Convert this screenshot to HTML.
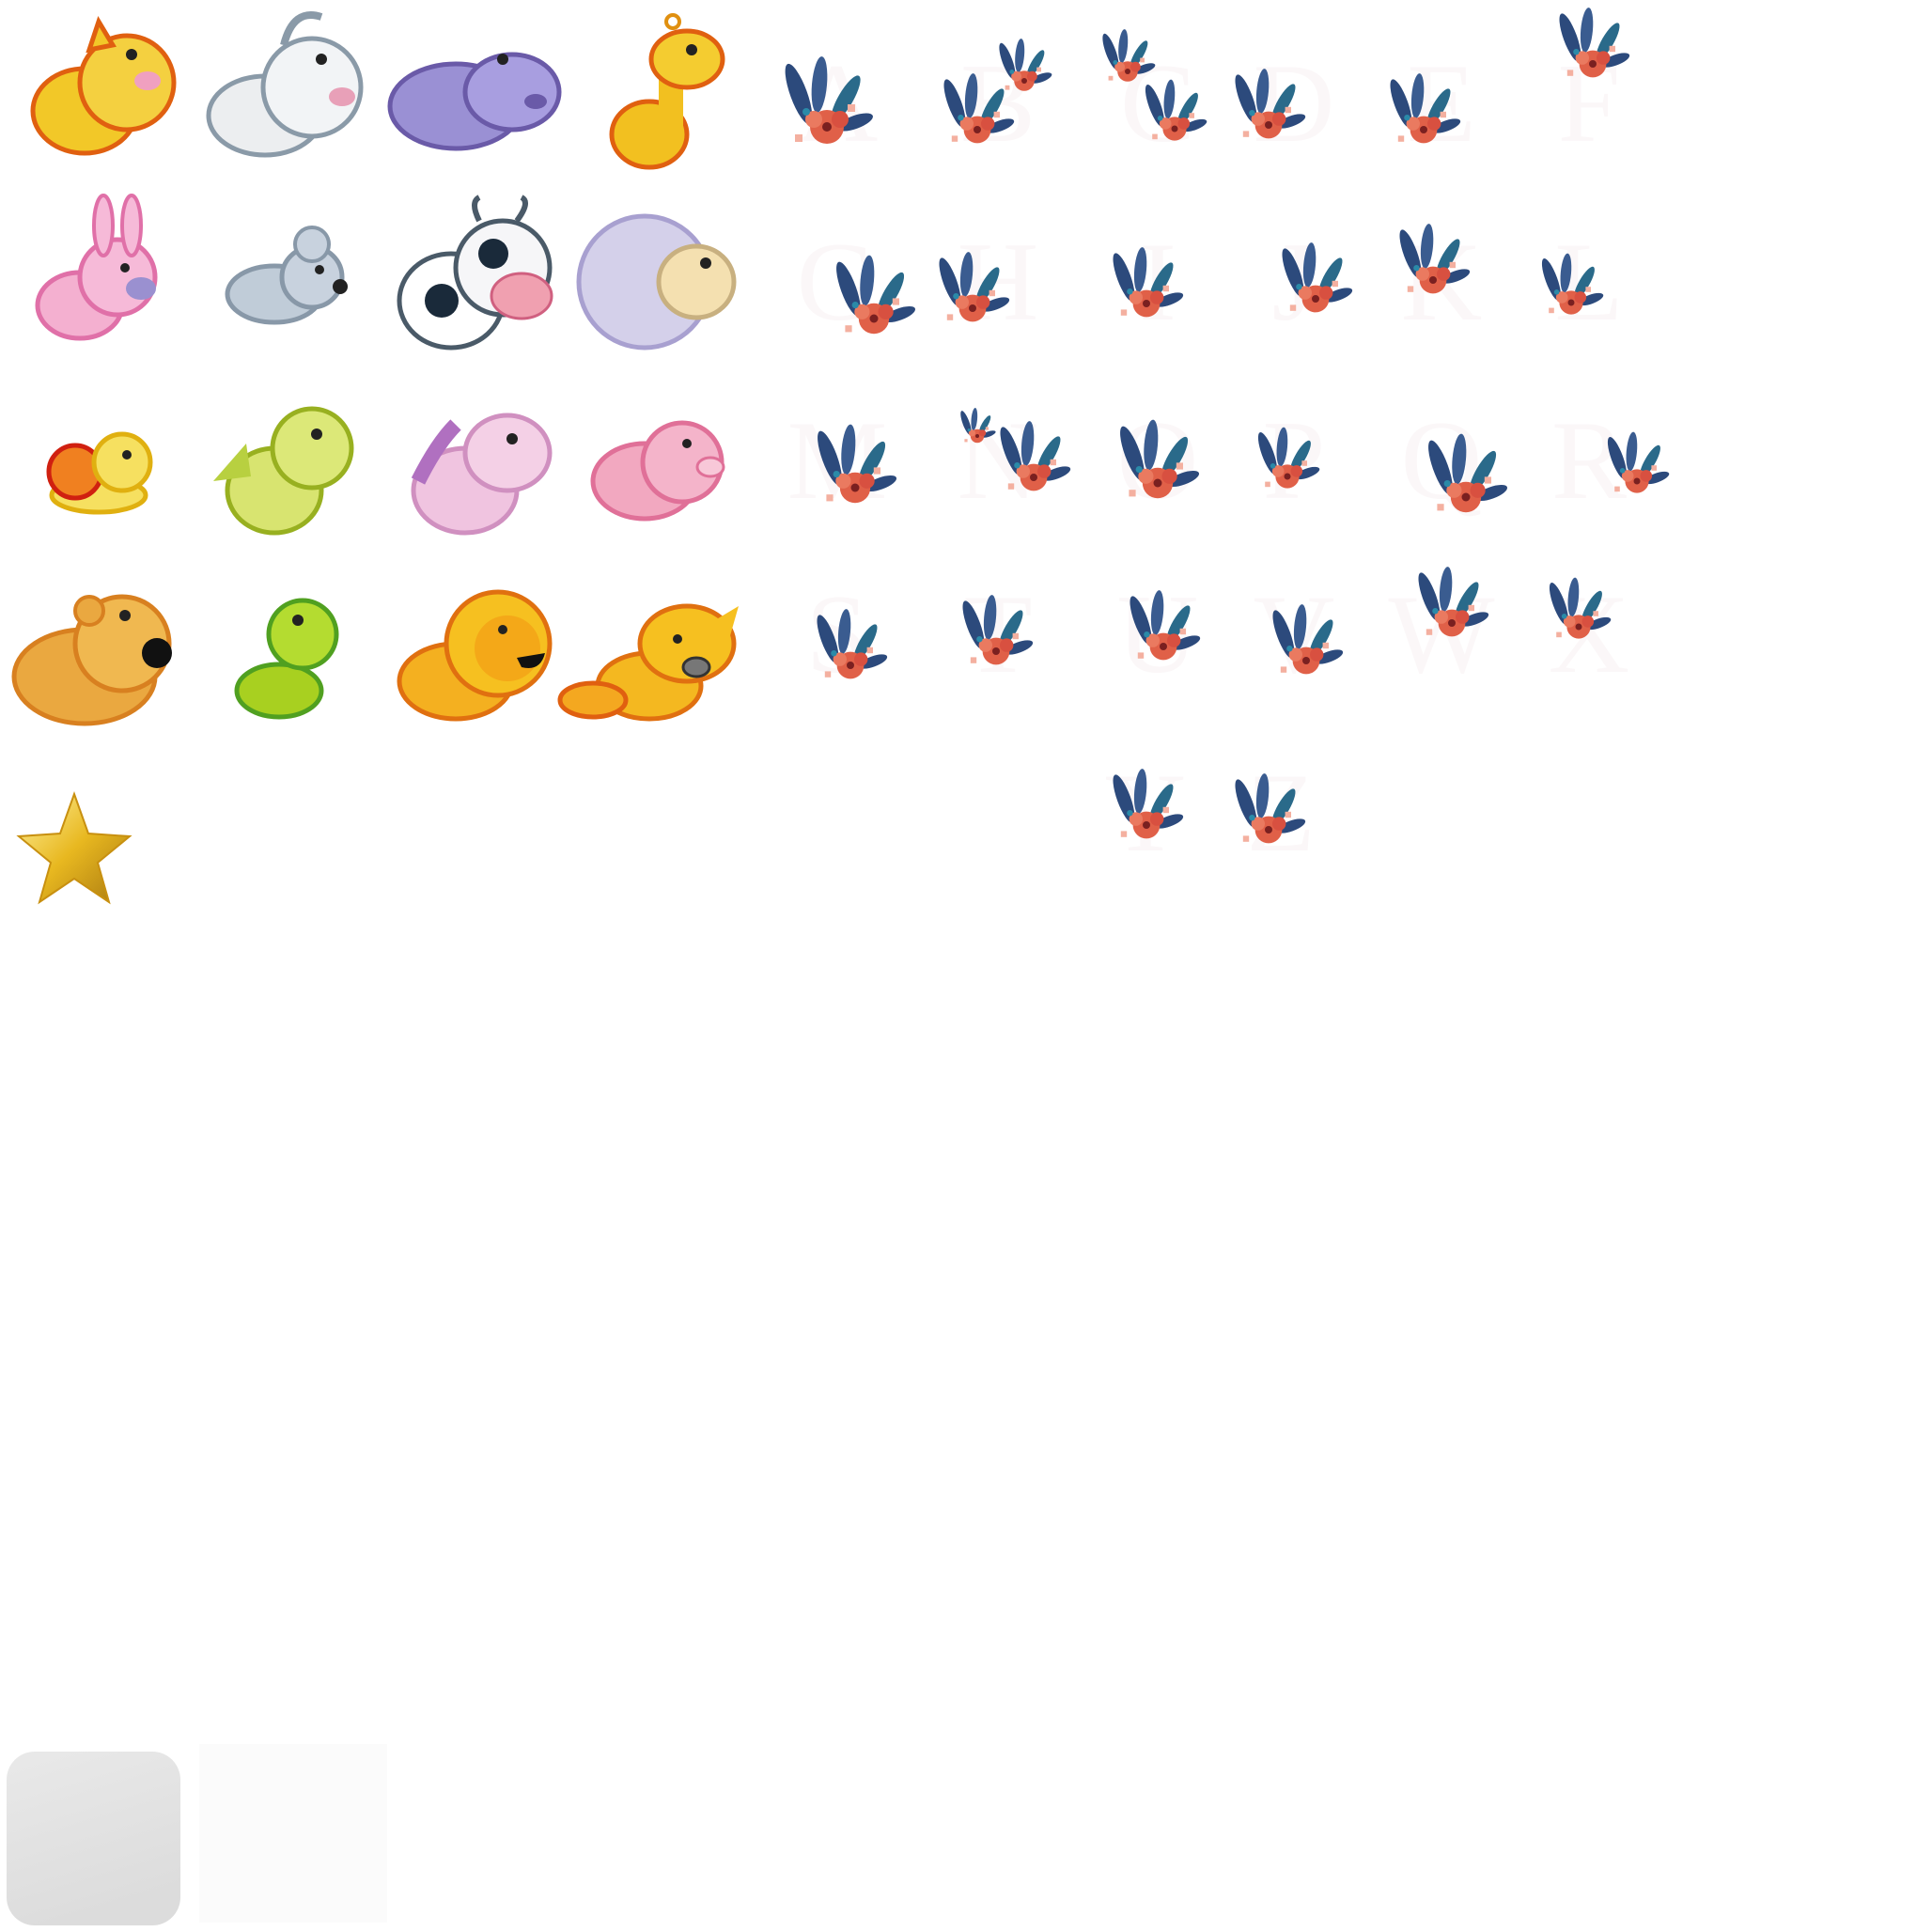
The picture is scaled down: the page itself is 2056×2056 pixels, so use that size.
<!DOCTYPE html>
<html><head><meta charset="utf-8"><style>
html,body{margin:0;padding:0;background:#fff;width:2056px;height:2056px;overflow:hidden}
svg{display:block}
</style></head><body>
<svg width="2056" height="2056" viewBox="0 0 2056 2056" xmlns="http://www.w3.org/2000/svg">
<defs>
<linearGradient id="gsq" x1="0" y1="0" x2="0.3" y2="1"><stop offset="0" stop-color="#e9e9e9"/><stop offset="1" stop-color="#dcdcdc"/></linearGradient>
<linearGradient id="gst" x1="0" y1="0" x2="1" y2="1"><stop offset="0" stop-color="#fff2a0"/><stop offset="0.5" stop-color="#e8b820"/><stop offset="1" stop-color="#a87810"/></linearGradient>
<g id="fl">
  <ellipse cx="-30" cy="-25" rx="9" ry="34" fill="#2c4a7c" transform="rotate(-20 -30 -25)"/>
  <ellipse cx="-8" cy="-35" rx="8" ry="30" fill="#3a5c90" transform="rotate(5 -8 -35)"/>
  <ellipse cx="20" cy="-20" rx="8" ry="28" fill="#2a6a8a" transform="rotate(30 20 -20)"/>
  <ellipse cx="30" cy="5" rx="7" ry="20" fill="#2c4a7c" transform="rotate(70 30 5)"/>
  <circle cx="0" cy="10" r="18" fill="#e06048"/>
  <circle cx="-14" cy="2" r="9" fill="#ea7a60"/>
  <circle cx="14" cy="2" r="9" fill="#d85040"/>
  <circle cx="0" cy="10" r="5" fill="#7a2020"/>
  <rect x="22" y="-14" width="8" height="8" fill="#f4b0a0"/>
  <rect x="-34" y="18" width="8" height="8" fill="#f4b0a0"/>
  <circle cx="-22" cy="-6" r="4" fill="#2a8aa8"/>
</g>
</defs>
<style>
.lt{font-family:"Liberation Serif",serif;font-size:120px;fill:#fbf7f8;text-anchor:middle}
.ol{stroke-width:5}
</style>

<!-- animals: body, head, ear, eye -->
<g id="animals">
<!-- row1 -->
<g transform="translate(105,98)"><ellipse cx="-15" cy="20" rx="55" ry="45" fill="#f2c828" stroke="#e06010" class="ol"/><circle cx="30" cy="-10" r="50" fill="#f4d040" stroke="#e06010" class="ol"/><ellipse cx="52" cy="-12" rx="14" ry="10" fill="#f0a0c0"/><circle cx="35" cy="-40" r="6" fill="#222"/><path d="M-10 -45 l10 -30 l15 25z" fill="#f2c828" stroke="#e06010" class="ol"/></g>
<g transform="translate(302,98)"><ellipse cx="-20" cy="25" rx="60" ry="42" fill="#eceef0" stroke="#8a9aa8" class="ol"/><circle cx="30" cy="-5" r="52" fill="#f2f4f6" stroke="#8a9aa8" class="ol"/><ellipse cx="62" cy="5" rx="14" ry="10" fill="#e8a0b8"/><circle cx="40" cy="-35" r="6" fill="#222"/><path d="M0 -50 q10 -40 40 -30" fill="none" stroke="#8a9aa8" stroke-width="8"/></g>
<g transform="translate(505,98)"><ellipse cx="-20" cy="15" rx="70" ry="45" fill="#9a90d4" stroke="#6a5aa8" class="ol"/><ellipse cx="40" cy="0" rx="50" ry="40" fill="#a89ee0" stroke="#6a5aa8" class="ol"/><circle cx="30" cy="-35" r="6" fill="#222"/><ellipse cx="65" cy="10" rx="12" ry="8" fill="#6a5aa8"/></g>
<g transform="translate(701,98)"><ellipse cx="-10" cy="45" rx="40" ry="35" fill="#f2c020" stroke="#e06010" class="ol"/><rect x="0" y="-30" width="26" height="70" fill="#f2c020"/><ellipse cx="30" cy="-35" rx="38" ry="30" fill="#f4cc30" stroke="#e06010" class="ol"/><circle cx="35" cy="-45" r="6" fill="#222"/><circle cx="15" cy="-75" r="7" fill="none" stroke="#e09010" stroke-width="4"/></g>
<!-- row2 -->
<g transform="translate(105,295)"><ellipse cx="-20" cy="30" rx="45" ry="35" fill="#f4b0d0" stroke="#e070a8" class="ol"/><circle cx="20" cy="0" r="40" fill="#f6bad8" stroke="#e070a8" class="ol"/><ellipse cx="5" cy="-55" rx="10" ry="32" fill="#f6bad8" stroke="#e070a8" stroke-width="4"/><ellipse cx="35" cy="-55" rx="10" ry="32" fill="#f6bad8" stroke="#e070a8" stroke-width="4"/><ellipse cx="45" cy="12" rx="16" ry="12" fill="#9a90d0"/><circle cx="28" cy="-10" r="5" fill="#222"/></g>
<g transform="translate(302,295)"><ellipse cx="-10" cy="18" rx="50" ry="30" fill="#c0ccd8" stroke="#8898a8" class="ol"/><circle cx="30" cy="0" r="32" fill="#c8d2de" stroke="#8898a8" class="ol"/><circle cx="30" cy="-35" r="18" fill="#c8d2de" stroke="#8898a8" stroke-width="4"/><circle cx="60" cy="10" r="8" fill="#222"/><circle cx="38" cy="-8" r="5" fill="#222"/></g>
<g transform="translate(505,295)"><ellipse cx="-25" cy="25" rx="55" ry="50" fill="#fff" stroke="#4a5a68" class="ol"/><circle cx="-35" cy="25" r="18" fill="#1a2a3a"/><circle cx="30" cy="-10" r="50" fill="#f6f6f8" stroke="#4a5a68" class="ol"/><ellipse cx="50" cy="20" rx="32" ry="24" fill="#f0a0b0" stroke="#d06080" stroke-width="3"/><circle cx="20" cy="-25" r="16" fill="#1a2a3a"/><path d="M5 -60 q-10 -20 0 -25 M45 -60 q15 -20 5 -25" stroke="#4a5a68" stroke-width="6" fill="none"/></g>
<g transform="translate(701,295)"><circle cx="-15" cy="5" r="70" fill="#d4d0ea" stroke="#a8a0d0" class="ol"/><ellipse cx="40" cy="5" rx="40" ry="38" fill="#f4e0b0" stroke="#c8b080" class="ol"/><circle cx="50" cy="-15" r="6" fill="#222"/></g>
<!-- row3 -->
<g transform="translate(105,492)"><ellipse cx="0" cy="35" rx="50" ry="18" fill="#f6e060" stroke="#e0b010" class="ol"/><circle cx="-25" cy="10" r="28" fill="#f08020" stroke="#d02010" class="ol"/><circle cx="25" cy="0" r="30" fill="#f6e060" stroke="#e0b010" class="ol"/><circle cx="30" cy="-8" r="5" fill="#222"/></g>
<g transform="translate(302,492)"><ellipse cx="-10" cy="30" rx="50" ry="45" fill="#d8e470" stroke="#98b020" class="ol"/><circle cx="30" cy="-15" r="42" fill="#dce878" stroke="#98b020" class="ol"/><path d="M-40 -20 l-35 40 l40 -5z" fill="#b8d040"/><circle cx="35" cy="-30" r="6" fill="#222"/></g>
<g transform="translate(505,492)"><ellipse cx="-10" cy="30" rx="55" ry="45" fill="#f0c4e0" stroke="#d090c0" class="ol"/><ellipse cx="35" cy="-10" rx="45" ry="40" fill="#f4d0e6" stroke="#d090c0" class="ol"/><path d="M-20 -40 q-20 20 -40 60" stroke="#b070c0" stroke-width="16" fill="none"/><circle cx="40" cy="-25" r="6" fill="#222"/></g>
<g transform="translate(701,492)"><ellipse cx="-15" cy="20" rx="55" ry="40" fill="#f2a8c0" stroke="#e07098" class="ol"/><circle cx="25" cy="0" r="42" fill="#f4b4ca" stroke="#e07098" class="ol"/><ellipse cx="55" cy="5" rx="14" ry="10" fill="#f8c8d8" stroke="#e07098" stroke-width="3"/><circle cx="30" cy="-20" r="5" fill="#222"/></g>
<!-- row4 -->
<g transform="translate(105,695)"><ellipse cx="-15" cy="25" rx="75" ry="50" fill="#eaa840" stroke="#d88020" class="ol"/><circle cx="25" cy="-10" r="50" fill="#f0b850" stroke="#d88020" class="ol"/><circle cx="-10" cy="-45" r="15" fill="#eaa840" stroke="#d88020" stroke-width="4"/><circle cx="62" cy="0" r="16" fill="#111"/><circle cx="28" cy="-40" r="6" fill="#222"/></g>
<g transform="translate(302,695)"><ellipse cx="-5" cy="40" rx="45" ry="28" fill="#a8d020" stroke="#50a020" class="ol"/><circle cx="20" cy="-20" r="36" fill="#b4dc30" stroke="#50a020" class="ol"/><circle cx="15" cy="-35" r="6" fill="#222"/></g>
<g transform="translate(505,695)"><ellipse cx="-20" cy="30" rx="60" ry="40" fill="#f4b020" stroke="#e07010" class="ol"/><circle cx="25" cy="-10" r="55" fill="#f6c020" stroke="#e07010" class="ol"/><circle cx="35" cy="-5" r="35" fill="#f4a818"/><path d="M45 5 l30 -5 q-5 20 -25 15z" fill="#111"/><circle cx="30" cy="-25" r="5" fill="#222"/></g>
<g transform="translate(701,695)"><ellipse cx="-10" cy="35" rx="55" ry="35" fill="#f4b820" stroke="#e07010" class="ol"/><ellipse cx="-70" cy="50" rx="35" ry="18" fill="#f4a820" stroke="#e06010" class="ol"/><ellipse cx="30" cy="-10" rx="50" ry="40" fill="#f6c020" stroke="#e07010" class="ol"/><path d="M60 -35 l25 -15 l-10 35z" fill="#f6c020"/><ellipse cx="40" cy="15" rx="14" ry="10" fill="#777" stroke="#333" stroke-width="3"/><circle cx="20" cy="-15" r="5" fill="#222"/></g>
</g>

<!-- star -->
<polygon points="79,845 94,887 138,890 104,918 116,960 79,935 42,960 54,918 20,890 64,887" fill="url(#gst)" stroke="#c89010" stroke-width="2"/>

<!-- letters -->
<g>
<text class="lt" x="891" y="150">A</text><use href="#fl" transform="translate(880,125)"/>
<text class="lt" x="1062" y="150">B</text><use href="#fl" transform="translate(1040,130) scale(0.8)"/><use href="#fl" transform="translate(1090,80) scale(0.6)"/>
<text class="lt" x="1232" y="150">C</text><use href="#fl" transform="translate(1200,70) scale(0.6)"/><use href="#fl" transform="translate(1250,130) scale(0.7)"/>
<text class="lt" x="1377" y="150">D</text><use href="#fl" transform="translate(1350,125) scale(0.8)"/>
<text class="lt" x="1534" y="150">E</text><use href="#fl" transform="translate(1515,130) scale(0.8)"/>
<text class="lt" x="1691" y="150">F</text><use href="#fl" transform="translate(1695,60) scale(0.8)"/>

<text class="lt" x="891" y="340">G</text><use href="#fl" transform="translate(930,330) scale(0.9)"/>
<text class="lt" x="1062" y="340">H</text><use href="#fl" transform="translate(1035,320) scale(0.8)"/>
<text class="lt" x="1232" y="340">I</text><use href="#fl" transform="translate(1220,315) scale(0.8)"/>
<text class="lt" x="1377" y="340">J</text><use href="#fl" transform="translate(1400,310) scale(0.8)"/>
<text class="lt" x="1534" y="340">K</text><use href="#fl" transform="translate(1525,290) scale(0.8)"/>
<text class="lt" x="1691" y="340">L</text><use href="#fl" transform="translate(1672,315) scale(0.7)"/>

<text class="lt" x="891" y="530">M</text><use href="#fl" transform="translate(910,510) scale(0.9)"/>
<text class="lt" x="1062" y="530">N</text><use href="#fl" transform="translate(1100,500) scale(0.8)"/><use href="#fl" transform="translate(1040,460) scale(0.4)"/>
<text class="lt" x="1232" y="530">O</text><use href="#fl" transform="translate(1232,505) scale(0.9)"/>
<text class="lt" x="1377" y="530">P</text><use href="#fl" transform="translate(1370,500) scale(0.7)"/>
<text class="lt" x="1534" y="530">Q</text><use href="#fl" transform="translate(1560,520) scale(0.9)"/>
<text class="lt" x="1691" y="530">R</text><use href="#fl" transform="translate(1742,505) scale(0.7)"/>

<text class="lt" x="891" y="715">S</text><use href="#fl" transform="translate(905,700) scale(0.8)"/>
<text class="lt" x="1062" y="715">T</text><use href="#fl" transform="translate(1060,685) scale(0.8)"/>
<text class="lt" x="1232" y="715">U</text><use href="#fl" transform="translate(1238,680) scale(0.8)"/>
<text class="lt" x="1377" y="715">V</text><use href="#fl" transform="translate(1390,695) scale(0.8)"/>
<text class="lt" x="1534" y="715">W</text><use href="#fl" transform="translate(1545,655) scale(0.8)"/>
<text class="lt" x="1691" y="715">X</text><use href="#fl" transform="translate(1680,660) scale(0.7)"/>

<text class="lt" x="1219" y="905">Y</text><use href="#fl" transform="translate(1220,870) scale(0.8)"/>
<text class="lt" x="1363" y="905">Z</text><use href="#fl" transform="translate(1350,875) scale(0.8)"/>
</g>

<!-- bottom squares -->
<rect x="7" y="1864" width="185" height="185" rx="30" fill="url(#gsq)"/>
<rect x="212" y="1856" width="200" height="190" fill="#fbfbfb"/>
</svg>
</body></html>
